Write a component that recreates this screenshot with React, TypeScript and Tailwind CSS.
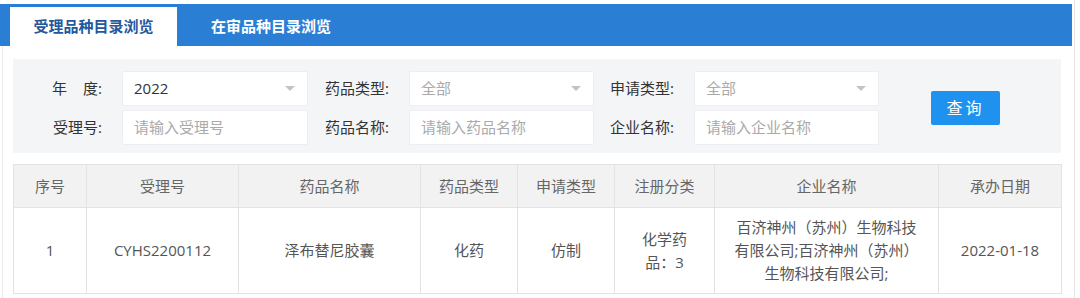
import React from "react";

const font = "font-['Open_Sans','Noto_Sans_CJK_SC',sans-serif]";

const Caret = () => (
  <svg width="10" height="5" viewBox="0 0 10 5" className="shrink-0">
    <path d="M0 0 L10 0 L5 5 Z" fill="#c4c4c4" />
  </svg>
);

const Select = ({ value, muted }: { value: string; muted?: boolean }) => (
  <div className="flex h-[35px] items-center justify-between rounded-[2px] border border-[#eceef1] bg-white pl-[11px] pr-[12px]">
    <span className={muted ? "text-[#aaaaaa]" : "text-[#333333]"}>{value}</span>
    <Caret />
  </div>
);

const Input = ({ placeholder }: { placeholder: string }) => (
  <div className="flex h-[35px] items-center rounded-[2px] border border-[#eceef1] bg-white pl-[11px] text-[#aaaaaa]">
    {placeholder}
  </div>
);

const Label = ({ children }: { children: React.ReactNode }) => (
  <div className="flex h-[35px] items-center justify-end pr-[20px] text-[#333333]">
    {children}
  </div>
);

const columns = [
  { title: "序号", w: "w-[73px]" },
  { title: "受理号", w: "w-[152px]" },
  { title: "药品名称", w: "w-[182px]" },
  { title: "药品类型", w: "w-[97px]" },
  { title: "申请类型", w: "w-[97px]" },
  { title: "注册分类", w: "w-[100px]" },
  { title: "企业名称", w: "w-[224px]" },
  { title: "承办日期", w: "w-[123px]" },
];

const row = [
  "1",
  "CYHS2200112",
  "泽布替尼胶囊",
  "化药",
  "仿制",
  "化学药品：3",
  "百济神州（苏州）生物科技有限公司;百济神州（苏州）生物科技有限公司;",
  "2022-01-18",
];

export default function App() {
  return (
    <div className={`h-[298px] w-[1080px] overflow-hidden bg-white text-[15px] ${font}`}>
      <div className="h-full w-[1075px] border-r border-[#e4e4e4] pt-[4px]">
        <div className="flex h-[42px] w-[1072px] items-end bg-[#2a7fd5] pl-[10px]">
          <div className="flex h-[39px] w-[167px] items-center justify-center bg-white font-semibold text-[#24589c]">
            受理品种目录浏览
          </div>
          <div className="flex h-[39px] w-[188px] items-center justify-center font-semibold text-white">
            在审品种目录浏览
          </div>
        </div>

        <div className="ml-[2px] h-full border-l border-[#ececec] pl-[10px] pt-[13px]">
          <div className="flex w-[1048px] items-center bg-[#f4f5f7] pb-[8px] pt-[12px]">
            <div className="grid grid-cols-[109px_186px_101px_185px_100px_185px] gap-y-[4px]">
              <Label>
                <span className="mr-[16px]">年</span>度:
              </Label>
              <Select value="2022" />
              <Label>药品类型:</Label>
              <Select value="全部" muted />
              <Label>申请类型:</Label>
              <Select value="全部" muted />

              <Label>受理号:</Label>
              <Input placeholder="请输入受理号" />
              <Label>药品名称:</Label>
              <Input placeholder="请输入药品名称" />
              <Label>企业名称:</Label>
              <Input placeholder="请输入企业名称" />
            </div>
            <button className="ml-[52px] h-[34px] w-[69px] rounded-[2px] bg-[#1f92ef] text-[16px] tracking-[3px] text-white">
              查询
            </button>
          </div>

          <table className="mt-[11px] w-[1048px] table-fixed border-collapse text-center">
            <thead>
              <tr className="h-[43px] bg-[#f2f2f2] text-[#666666]">
                {columns.map((c) => (
                  <th key={c.title} className={`${c.w} border border-[#e3e3e3] px-[15px] font-normal`}>
                    {c.title}
                  </th>
                ))}
              </tr>
            </thead>
            <tbody>
              <tr className="h-[86px] text-[#555555]">
                {row.map((v, i) => (
                  <td key={i} className="border border-[#e3e3e3] px-[15px] leading-[23px]">
                    {v}
                  </td>
                ))}
              </tr>
            </tbody>
          </table>
        </div>
      </div>
    </div>
  );
}
